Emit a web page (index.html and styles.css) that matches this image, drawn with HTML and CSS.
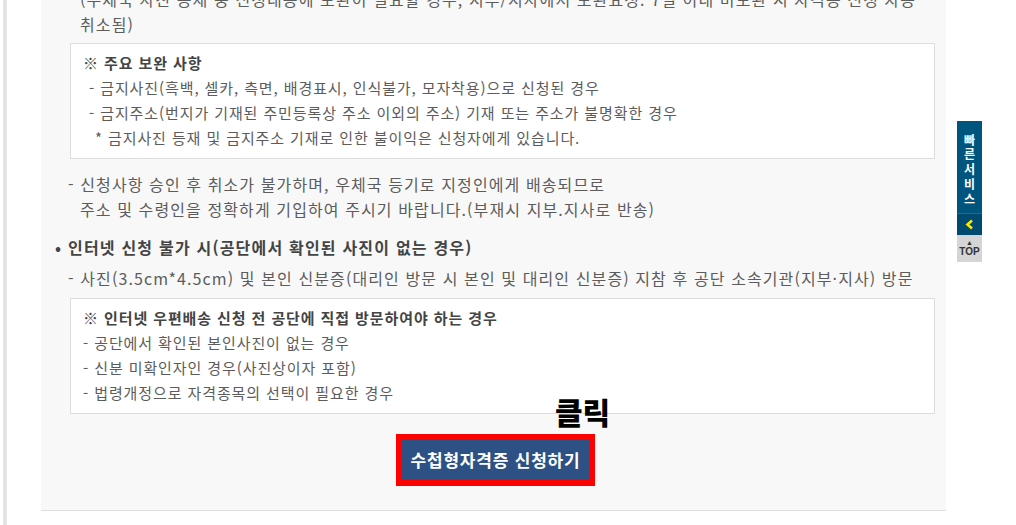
FILE: index.html
```html
<!DOCTYPE html>
<html lang="ko">
<head>
  <meta charset="UTF-8">
  <meta name="viewport" content="width=device-width, initial-scale=1.0">
  <title>수첩형자격증 신청</title>
  <link rel="stylesheet" href="styles.css">
</head>
<body>
  <div class="page">
    <div class="left-bar"></div>
    <div class="container">
      <div class="guide-panel">
        <p class="dash-item indent">(우체국 사진 등재 중 신청내용에 보완이 필요할 경우, 지부/지사에서 보완요청. 7일 이내 미보완 시 자격증 신청 자동<br>취소됨)</p>

        <div class="notice-box first">
          <p class="notice-title">※ 주요 보완 사항</p>
          <p class="notice-line sub">- 금지사진(흑백, 셀카, 측면, 배경표시, 인식불가, 모자착용)으로 신청된 경우</p>
          <p class="notice-line sub">- 금지주소(번지가 기재된 주민등록상 주소 이외의 주소) 기재 또는 주소가 불명확한 경우</p>
          <p class="notice-line star">* 금지사진 등재 및 금지주소 기재로 인한 불이익은 신청자에게 있습니다.</p>
        </div>

        <p class="dash-item after-box">- 신청사항 승인 후 취소가 불가하며, 우체국 등기로 지정인에게 배송되므로<br>주소 및 수령인을 정확하게 기입하여 주시기 바랍니다.(부재시 지부.지사로 반송)</p>

        <h4 class="bullet-title">인터넷 신청 불가 시(공단에서 확인된 사진이 없는 경우)</h4>
        <p class="dash-item near">- 사진(3.5cm*4.5cm) 및 본인 신분증(대리인 방문 시 본인 및 대리인 신분증) 지참 후 공단 소속기관(지부·지사) 방문</p>

        <div class="notice-box">
          <p class="notice-title">※ 인터넷 우편배송 신청 전 공단에 직접 방문하여야 하는 경우</p>
          <p class="notice-line">- 공단에서 확인된 본인사진이 없는 경우</p>
          <p class="notice-line">- 신분 미확인자인 경우(사진상이자 포함)</p>
          <p class="notice-line">- 법령개정으로 자격종목의 선택이 필요한 경우</p>
        </div>

        <div class="btn-area">
          <div class="btn-mark">
            <span class="click-note">클릭</span>
            <a href="#" class="apply-btn">수첩형자격증 신청하기</a>
          </div>
        </div>
      </div>
    </div>
  </div>

  <div class="quick-menu">
    <div class="quick-title">빠른서비스</div>
    <div class="quick-toggle">
      <svg width="9" height="11" viewBox="0 0 9 11"><path d="M7 1.5 L2.5 5.5 L7 9.5" fill="none" stroke="#ffe600" stroke-width="2.6"/></svg>
    </div>
    <a href="#" class="quick-top"><span class="top-arrow">▲</span>TOP</a>
  </div>
</body>
</html>
```

FILE: styles.css
```css
body {
  margin: 0;
  background-color: #fff;
  font-family: "Noto Sans CJK KR", "Noto Sans", sans-serif;
  font-size: 16px;
  letter-spacing: 1.1px;
  color: #5c5c5c;
  overflow: hidden;
}
p, h4 {
  margin: 0;
}
.page {
  display: flex;
  min-height: 100vh;
}
.left-bar {
  width: 4px;
  margin-left: 3px;
  background: linear-gradient(to right, #eaeaea, #dedede, #ececec);
}
.container {
  width: 905px;
  margin-left: 34px;
}
.guide-panel {
  margin-top: -13px;
  padding: 0 11px 24px 27px;
  background-color: #f8f8f8;
  border-bottom: 1px solid #dedede;
  line-height: 25px;
}
.dash-item {
  padding-left: 12px;
  text-indent: -12px;
}
.dash-item.indent {
  text-indent: 0;
}
.dash-item.after-box {
  margin-top: 13px;
}
.dash-item.near {
  margin-top: 6px;
}
.notice-box {
  margin: 7px 0 0 2px;
  padding: 6px 12px 8px;
  background-color: #fff;
  border: 1px solid #dddddd;
  font-size: 15px;
  letter-spacing: 0.9px;
}
.notice-box.first {
  margin-top: 6px;
}
.notice-title {
  font-weight: bold;
  color: #444;
}
.notice-line.sub {
  padding-left: 6px;
}
.notice-line.star {
  padding-left: 12px;
}
.bullet-title {
  margin: 13px 0 0 -13px;
  font-size: 16px;
  font-weight: bold;
  letter-spacing: 1.2px;
  color: #444;
}
.bullet-title::before {
  content: "•";
  display: inline-block;
  width: 13px;
  letter-spacing: 0;
}
.btn-area {
  display: flex;
  justify-content: center;
  margin: 20px -11px 0 -27px;
  padding-left: 4px;
}
.btn-mark {
  position: relative;
  border: 6px solid #ff0000;
}
.apply-btn {
  display: block;
  width: 187px;
  height: 40px;
  line-height: 40px;
  text-align: center;
  background-color: #2e5185;
  color: #fff;
  font-size: 17px;
  letter-spacing: 0.8px;
  font-weight: bold;
  text-decoration: none;
}
.click-note {
  position: absolute;
  top: -44px;
  left: 153px;
  font-size: 30px;
  line-height: 1;
  letter-spacing: 0;
  font-weight: 900;
  color: #000;
  white-space: nowrap;
}
.quick-menu {
  position: fixed;
  top: 121px;
  right: 34px;
  width: 25px;
  letter-spacing: 0;
}
.quick-title {
  height: 92px;
  background-color: #00557f;
  color: #fff;
  font-size: 12px;
  font-weight: bold;
  writing-mode: vertical-rl;
  text-orientation: upright;
  letter-spacing: 2.8px;
  line-height: 25px;
  padding-top: 13px;
  box-sizing: border-box;
}
.quick-toggle {
  height: 22px;
  background-color: #004a70;
  border-top: 1px solid #1a6a92;
  box-sizing: border-box;
  display: flex;
  justify-content: center;
  align-items: center;
}
.quick-top {
  display: flex;
  flex-direction: column;
  align-items: center;
  height: 27px;
  background-color: #d5d5d5;
  color: #333;
  font-family: "Liberation Sans", sans-serif;
  font-size: 10px;
  font-weight: bold;
  line-height: 10px;
  padding-top: 4px;
  box-sizing: border-box;
  text-decoration: none;
}
.top-arrow {
  font-size: 7px;
  line-height: 8px;
}
```
